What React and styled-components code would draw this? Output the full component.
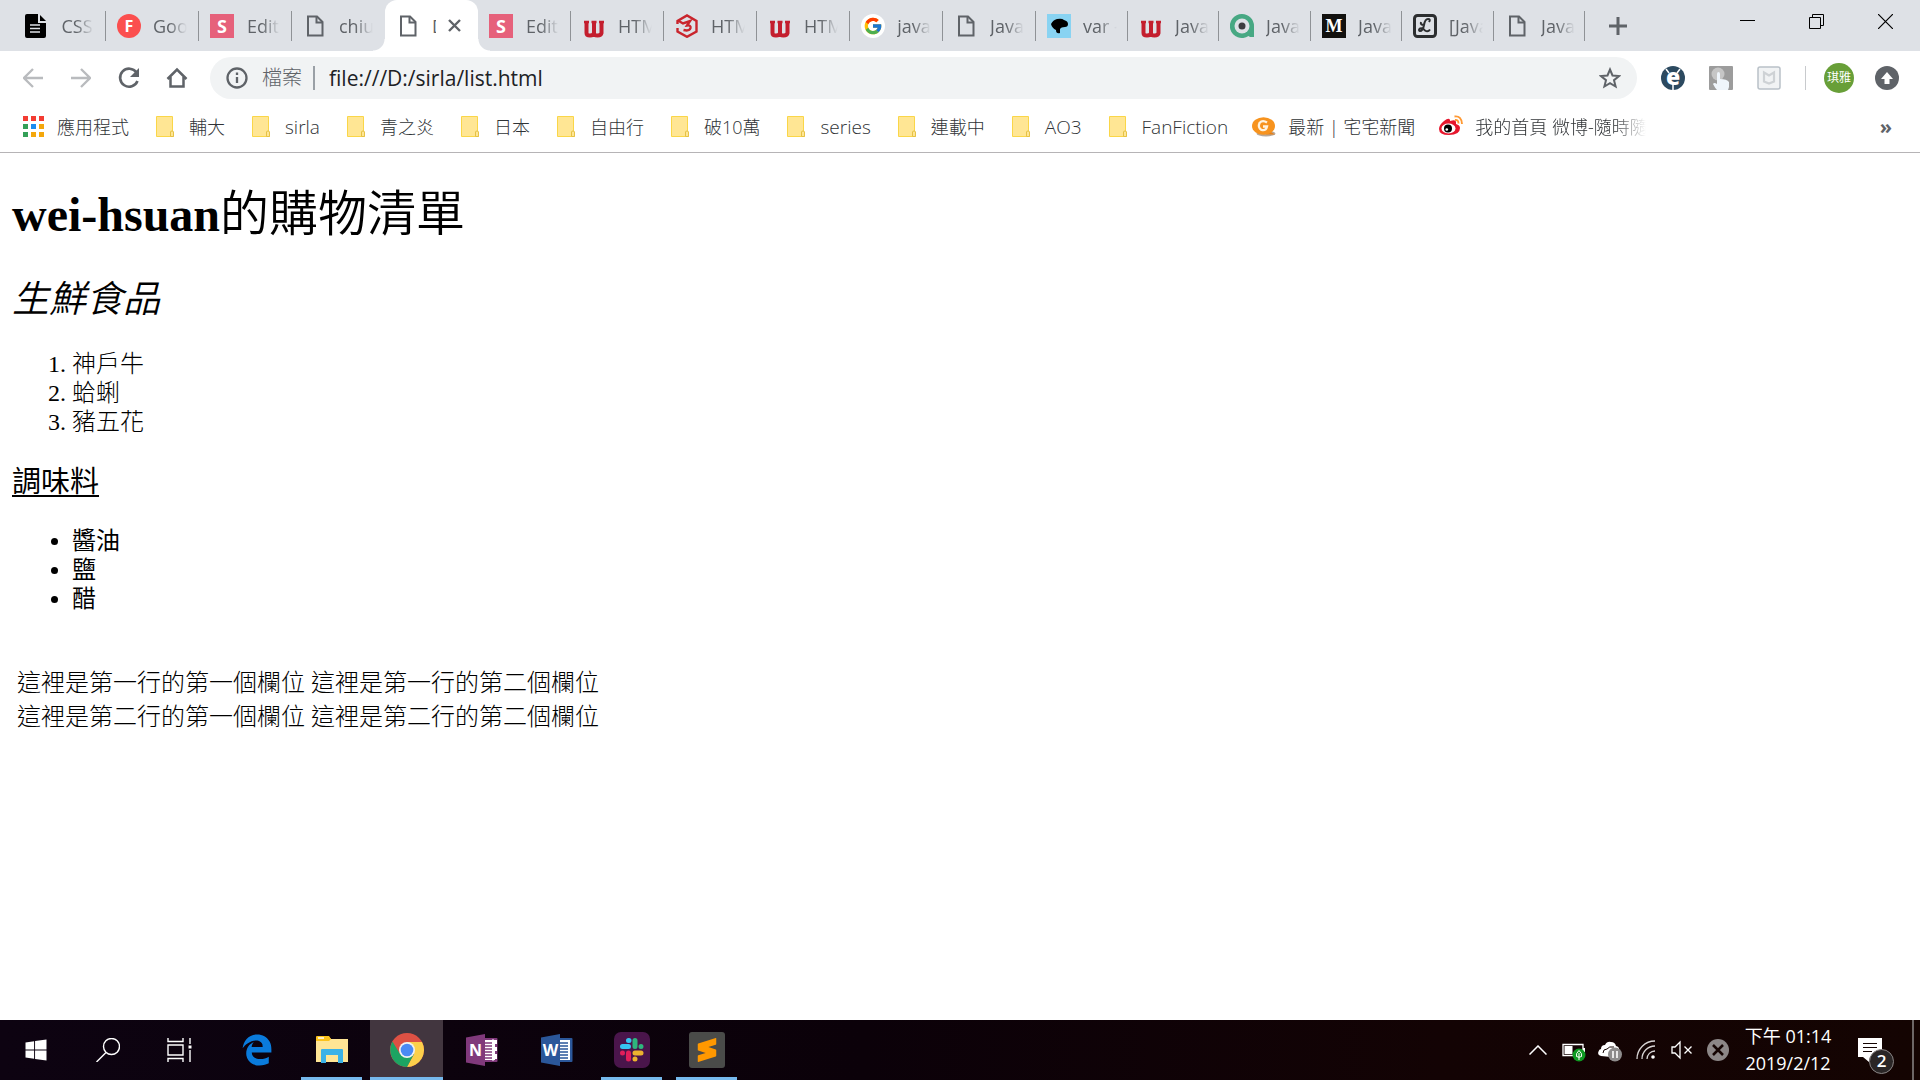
import React from 'react';
import styled, {createGlobalStyle, css} from 'styled-components';
import {FaEdgeLegacy} from 'react-icons/fa6';
import {FaWindows} from 'react-icons/fa';
import {FcGoogle} from 'react-icons/fc';
import {SiSublimetext} from 'react-icons/si';

const GlobalStyle = createGlobalStyle`
  * {
    box-sizing: border-box;
  }

  body {
    margin: 0;
    background: #fff;
  }

  button {
    border: 0;
    padding: 0;
    background: none;
    font: inherit;
    color: inherit;
  }
`;

const uiFont = '"Open Sans", "Noto Sans CJK TC", sans-serif';

const Screen = styled.div`
  display: flex;
  flex-direction: column;
  min-height: 100vh;
  font-family: ${uiFont};
`;

/* ---------- tab strip ---------- */

const TabStrip = styled.div`
  display: flex;
  height: 51px;
  padding-left: 13px;
  background: #dee1e6;
`;

const Tabs = styled.div`
  display: grid;
  grid-template-columns: repeat(11, 93px) repeat(3, 92px 91px);
`;

const TabButton = styled.button`
  position: relative;
  display: flex;
  align-items: center;
  gap: 12px;
  padding-left: 11px;
  font-size: 18px;
  color: #5f6368;

  ${props =>
   props.$line &&
   css`
      &::after {
        content: '';
        position: absolute;
        right: 0;
        top: 11px;
        width: 1px;
        height: 30px;
        background: #8f9296;
      }
    `}

  ${props =>
   props.$active &&
   css`
      background: #fff;
      border-radius: 12px 12px 0 0;

      &::before,
      &::after {
        content: '';
        position: absolute;
        bottom: 0;
        width: 12px;
        height: 12px;
      }

      &::before {
        left: -12px;
        background: radial-gradient(circle at 0 0, #dee1e6 11px, #fff 12px);
      }

      &::after {
        right: -12px;
        background: radial-gradient(circle at 100% 0, #dee1e6 11px, #fff 12px);
      }
    `}
`;

const TabTitle = styled.span`
  width: ${props => (props.$active ? '4px' : '34px')};
  overflow: hidden;
  white-space: nowrap;
  line-height: 26px;
  mask-image: ${props => (props.$active ? 'none' : 'linear-gradient(to right, #000 16px, transparent 34px)')};
`;

const TabClose = styled.span`
  display: flex;
`;

const NewTab = styled.button`
  display: flex;
  align-items: center;
  justify-content: center;
  width: 40px;
  margin-left: 13px;
`;

const WindowButtons = styled.div`
  display: flex;
  height: 42px;
  margin-left: auto;
`;

const WindowButton = styled.button`
  display: flex;
  align-items: center;
  justify-content: center;
  width: 69px;
`;

const Favicon = styled.span`
  display: flex;
  flex: none;
  align-items: center;
  justify-content: center;
  width: 24px;
  height: 24px;
  line-height: 24px;
  font-size: ${props => props.$size || 18}px;
  font-weight: bold;
  font-family: ${props => props.$font || uiFont};
  color: ${props => props.$color || '#fff'};
  background: ${props => props.$bg || 'none'};
  border-radius: ${props => (props.$round ? '50%' : '0')};
`;

/* ---------- toolbar ---------- */

const Toolbar = styled.div`
  display: flex;
  align-items: center;
  height: 54px;
  padding: 0 9px;
`;

const ToolButton = styled.button`
  display: flex;
  flex: none;
  align-items: center;
  justify-content: center;
  width: 48px;
  height: 42px;
`;

const Omnibox = styled.div`
  display: flex;
  flex: 1;
  align-items: center;
  height: 42px;
  margin: 0 12px 0 9px;
  padding: 0 3px 0 16px;
  border-radius: 21px;
  background: #f1f3f4;
`;

const Scheme = styled.label`
  margin-left: 14px;
  padding-right: 11px;
  border-right: 2px solid #9aa0a6;
  font-size: 20px;
  line-height: 24px;
  font-weight: 300;
  color: #5f6368;
`;

const UrlInput = styled.input`
  flex: 1;
  min-width: 0;
  margin-left: 14px;
  padding: 0;
  border: 0;
  outline: none;
  background: none;
  font: 21px/28px ${uiFont};
  color: #202124;
`;

const ToolDivider = styled.span`
  width: 1px;
  height: 24px;
  margin: 0 9px 0 12px;
  background: #c8cacd;
`;

const Avatar = styled.span`
  width: 30px;
  height: 30px;
  border-radius: 50%;
  background: #689f38;
  font-size: 12px;
  line-height: 30px;
  text-align: center;
  color: #fff;
`;

/* ---------- bookmarks ---------- */

const BookmarkBar = styled.nav`
  display: flex;
  align-items: center;
  height: 48px;
  padding: 0 17px 4px 9px;
  border-bottom: 1px solid #b6b4b6;
`;

const Bookmark = styled.a`
  display: flex;
  flex: none;
  align-items: center;
  gap: 12px;
  padding: 0 12px;
  font-size: 18px;
  line-height: 26px;
  font-weight: 300;
  color: #303336;
  text-decoration: none;
  white-space: nowrap;
`;

const BookmarkText = styled.span`
  font-size: ${props => (props.$latin ? '19px' : '18px')};

  ${props =>
   props.$fade &&
   css`
      width: 171px;
      overflow: hidden;
      mask-image: linear-gradient(to right, #000 140px, transparent 171px);
    `}
`;

const More = styled.button`
  margin-left: auto;
  padding: 0 11px;
  font-size: 20px;
  font-weight: bold;
  line-height: 24px;
  color: #5f6368;
`;

/* ---------- page ---------- */

const Page = styled.main`
  flex: 1;
  padding: 33px 12px 0;
  font: 300 24px/29px "Liberation Serif", "Noto Sans CJK TC", serif;
  color: #000;
`;

const Title = styled.h1`
  margin: 0;
  font-size: 48px;
  line-height: 58px;

  span {
    font-size: 49px;
    font-weight: 350;
  }
`;

const Fresh = styled.h2`
  margin: 34px 0 0;
  font-size: 37px;
  line-height: 44px;
  font-style: italic;
  font-weight: 350;
`;

const Seasoning = styled.h3`
  margin: 28px 0 0;
  font-size: 29px;
  line-height: 34px;
  font-weight: 400;
  text-decoration: underline;
  text-underline-offset: 3px;
`;

const FreshList = styled.ol`
  margin: 28px 0 0;
  padding-left: 60px;
`;

const SeasoningList = styled.ul`
  margin: 28px 0 0;
  padding-left: 60px;
  font-weight: 400;
`;

const Grid = styled.table`
  margin-top: 50px;
  border-spacing: 4px;

  td {
    padding: 1px;
    line-height: 28px;
    white-space: nowrap;
  }
`;

/* ---------- taskbar ---------- */

const Taskbar = styled.footer`
  display: flex;
  height: 60px;
  background: linear-gradient(to right, #0d0311, #0b0109 45%, #130304 75%, #140402);
  color: #fff;
`;

const TaskButton = styled.button`
  display: flex;
  align-items: center;
  justify-content: center;
  width: 72px;
`;

const Apps = styled.div`
  display: flex;
  margin-left: 3px;
`;

const AppButton = styled.button`
  display: flex;
  align-items: center;
  justify-content: center;
  width: ${props => (props.$active ? '73px' : '61px')};
  margin: ${props => (props.$active ? '0 1px' : '0 7px')};
  padding-top: 3px;
  border-bottom: 3px solid ${props => (props.$open ? '#76b9ed' : 'transparent')};
  background: ${props => (props.$active ? '#42363f' : 'none')};
`;

const SublimeTile = styled.span`
  display: flex;
  align-items: center;
  justify-content: center;
  width: 36px;
  height: 36px;
  border-radius: 3px;
  background: #4a4b49;
  color: #ff9800;
`;

const Tray = styled.div`
  display: flex;
  align-items: center;
  margin-left: auto;
`;

const TrayButton = styled.button`
  display: flex;
  align-items: center;
  justify-content: center;
  width: 36px;
  height: 60px;
`;

const Clock = styled.time`
  width: 104px;
  font-size: 18px;
  line-height: 27px;
  text-align: center;
`;

const Notice = styled.button`
  position: relative;
  display: flex;
  align-items: center;
  width: 72px;
  height: 60px;
  padding-left: 18px;
`;

const Badge = styled.span`
  position: absolute;
  left: 29px;
  top: 29px;
  width: 25px;
  height: 25px;
  border: 1px solid #8a8585;
  border-radius: 50%;
  background: #2a2626;
  font-size: 17px;
  font-weight: 600;
  line-height: 22px;
  text-align: center;
`;

const ShowDesktop = styled.button`
  width: 8px;
  height: 60px;
  border-left: 2px solid #6d6666;
`;

/* ---------- icons ---------- */

const PageIcon = () => (
   <svg width="24" height="24" viewBox="0 0 24 24" fill="none" stroke="#5f6368" strokeWidth="2">
      <path d="M5 2.500h9l5.500 5.500v13.500H5z"/>
      <path d="M13.500 2.500v6h6"/>
   </svg>
);

const BlackDoc = () => (
   <svg width="24" height="24" viewBox="0 0 24 24">
      <path d="M3 0h11v9h8v13q0 2-2 2H3q-2 0-2-2V2q0-2 2-2z"/>
      <path d="M16 1l6 6h-6z"/>
      <path d="M6 11h10M6 14.500h10M6 18h10" stroke="#dee1e6" strokeWidth="1.500"/>
   </svg>
);

const WIcon = () => (
   <svg width="24" height="24" viewBox="0 0 24 24" fill="none" stroke="#c41e2e" strokeWidth="4">
      <path d="M4.500 8v11q0 2.500 3.500 2.500t4-2.500V8M12 19q0 2.500 3.500 2.500t4-2.500V8"/>
      <path d="M2 8h5M9.500 8h5M17 8h5" strokeWidth="2.500"/>
   </svg>
);

const HexIcon = () => (
   <svg width="24" height="24" viewBox="0 0 24 24" fill="none" stroke="#c9252d" strokeWidth="2.400">
      <path d="M2.500 10V7L12 1.500 21.500 7v10.500L12 22.800l-9.500-5.300V14"/>
      <path d="M3 6.500l5 3 7-2.500-3 4.500q4-.5 3.500 2.500-1 3.500-7 2"/>
   </svg>
);

const BirdIcon = () => (
   <svg width="24" height="24" viewBox="0 0 24 24">
      <path d="M0 0h24v24H0z" fill="#89d3f2"/>
      <path d="M4 10q2-4 6-5 5-1 7 1 4 1 4 4 0 3-3 3-4 0-5 2v4q-4 1-4-3-4-2-5-6z"/>
   </svg>
);

const AIcon = () => (
   <svg width="24" height="24" viewBox="0 0 24 24">
      <path d="M12 0a12 12 0 1 0 6.500 22l1.500 1h4V12A12 12 0 0 0 12 0z" fill="#47a883"/>
      <circle cx="12" cy="12" r="7.500" fill="#dee1e6"/>
      <circle cx="12" cy="12" r="3.500" fill="#3d3d40"/>
   </svg>
);

const LIcon = () => (
   <svg width="24" height="24" viewBox="0 0 24 24" fill="none" stroke="#2c2e30">
      <rect x="1.500" y="1.500" width="21" height="21" rx="3" strokeWidth="3"/>
      <path d="M16 8q2-3-1-3-3 0-4 6-1 6-4 6-2-1 0-2.500 3-1 5 2 3 2 5-1M11 11q-4 0-3-3" strokeWidth="2"/>
   </svg>
);

const Back = ({flip}) => (
   <svg width="20" height="20" viewBox="0 0 20 20" fill="none" stroke="#b9bbbe" strokeWidth="2.300">
      {flip ? <path d="M0 10h18M10 1l9 9-9 9"/> : <path d="M20 10H2M10 1l-9 9 9 9"/>}
   </svg>
);

const Reload = () => (
   <svg width="22" height="22" viewBox="0 0 22 22" fill="none" stroke="#5f6368" strokeWidth="2.600">
      <path d="M18.500 5.500A9 9 0 1 0 19.500 14"/>
      <path d="M21 1v9h-9z" fill="#5f6368" stroke="none"/>
   </svg>
);

const Home = () => (
   <svg width="22" height="22" viewBox="0 0 22 22" fill="none" stroke="#5f6368" strokeWidth="2.500">
      <path d="M1.500 12L11 2.500l9.500 9.500M4.500 10v9.500h13V10"/>
   </svg>
);

const Info = () => (
   <svg width="22" height="22" viewBox="0 0 22 22" fill="none" stroke="#5f6368" strokeWidth="2.300">
      <circle cx="11" cy="11" r="9.500"/>
      <path d="M11 10v6M11 5.500v2.500"/>
   </svg>
);

const Star = () => (
   <svg width="22" height="22" viewBox="0 0 22 22" fill="none" stroke="#5f6368" strokeWidth="2">
      <path d="M11 2.500l2.500 6 6.500.5-5 4.200 1.600 6.300L11 16.200 5.400 19.500 7 13.200 2 9l6.500-.5z"/>
   </svg>
);

const ExtE = () => (
   <svg width="24" height="24" viewBox="0 0 24 24">
      <circle cx="12" cy="12" r="12" fill="#2c4a60"/>
      <path d="M5 3l3 4M19 3l-3 4M12 18v6" stroke="#fff" strokeWidth="1.500"/>
      <text x="12" y="18.500" textAnchor="middle" fontFamily="Open Sans, sans-serif" fontSize="23" fontWeight="800" fill="#fff">e</text>
   </svg>
);

const ExtTouch = () => (
   <svg width="24" height="24" viewBox="0 0 24 24">
      <rect width="24" height="24" rx="1" fill="#9c9c9c"/>
      <circle cx="9" cy="8" r="6.500" fill="#c6c6c6"/>
      <path d="M8 8q0-2 1.500-2T11 8v5q7 0 9 3v5l-1 3H8q-2-2-4-6 1-2 4 0z" fill="#eff5fb"/>
   </svg>
);

const ExtShield = () => (
   <svg width="24" height="24" viewBox="0 0 24 24" fill="none">
      <rect x="1" y="1" width="22" height="22" rx="2" fill="#f1f3f4" stroke="#b9c1c8" strokeWidth="1.500"/>
      <path d="M7 6.500l5 3 5-3v9l-5 2-5-2z" stroke="#ced2d5" strokeWidth="2.200"/>
   </svg>
);

const UpIcon = () => (
   <svg width="24" height="24" viewBox="0 0 24 24">
      <circle cx="12" cy="12" r="12" fill="#5f6368"/>
      <path d="M12 6l6 7h-3.500v5h-5v-5H6z" fill="#fff"/>
   </svg>
);

const AppsIcon = () => (
   <svg width="24" height="24" viewBox="0 0 24 24">
      {['#f33c32', '#f33c32', '#f33c32', '#34a058', '#1a8cf0', '#f4a70c', '#34a058', '#f4a70c', '#f4a70c'].map((color, idx) => (
         <rect key={idx} x={2 + (idx % 3) * 8} y={1 + Math.floor(idx / 3) * 8} width="5" height="5" fill={color}/>
      ))}
   </svg>
);

const FolderIcon = () => (
   <svg width="24" height="24" viewBox="0 0 24 24" fill="#ffe694" stroke="#fad648">
      <path d="M3.500 1.500h16v15l1 5h-17z"/>
      <path d="M17.500 21.500V17q0-1 1.500-1t1.500 1v4.500z" stroke="#e6c246"/>
   </svg>
);

const OrangeG = () => (
   <svg width="24" height="24" viewBox="0 0 24 24">
      <ellipse cx="14" cy="18.500" rx="9.500" ry="3" fill="#b9a898"/>
      <path d="M17 16l6 3.500h-9z" fill="#e5811a"/>
      <ellipse cx="11.500" cy="11" rx="11.500" ry="8.800" fill="#f7931e"/>
      <path d="M15 7.500Q10.500 4.500 7.500 8q-2 4.500 2 7 4.500 1 5.500-3.500h-4" fill="none" stroke="#fff3df" strokeWidth="2.300"/>
   </svg>
);

const WeiboIcon = () => (
   <svg width="24" height="24" viewBox="0 0 24 24">
      <path d="M0 14q0-4 5-8 5-4 6-1 0 1 0 1 6-2 6 1v2q4 1 4 4 0 7-11 7Q0 20 0 14z" fill="#e6162d"/>
      <ellipse cx="9.500" cy="13.500" rx="7" ry="5" fill="#fff"/>
      <circle cx="9" cy="13.500" r="4" fill="#000"/>
      <circle cx="7.800" cy="14.500" r="1.300" fill="#fff"/>
      <path d="M15.500 1.500q7-1 7.500 7.500M16 5q3.500-.5 3.500 3.500" fill="none" stroke="#ff9933" strokeWidth="1.900"/>
   </svg>
);

const TaskView = () => (
   <svg width="26" height="24" viewBox="0 0 26 24" fill="none" stroke="#fff" strokeWidth="1.400">
      <path d="M1 0v3.500h15V0M1 24v-3.500h15V24M1 7h15v10H1zM23 0v6M23 12v12"/>
      <path d="M21.500 7.500h3v3h-3z" fill="#fff" stroke="none"/>
   </svg>
);

const SearchIcon = () => (
   <svg width="24" height="24" viewBox="0 0 24 24" fill="none" stroke="#fff" strokeWidth="1.400">
      <circle cx="15.500" cy="8.500" r="8"/>
      <path d="M10 14.500L.5 24"/>
   </svg>
);

const Explorer = () => (
   <svg width="32" height="28" viewBox="0 0 32 28">
      <path d="M0 1h13l2 2h17v23H0z" fill="#ffe595"/>
      <path d="M0 1q0-1 1-1h12l2 3-2 2H0z" fill="#fcc21b"/>
      <path d="M2 2h6" stroke="#fff" strokeWidth="1.500"/>
      <path d="M5 14q0-1 1-1h20q1 0 1 1v13h-5v-8H10v8H5z" fill="#3bb2e7"/>
   </svg>
);

const Chrome = () => (
   <svg width="34" height="34" viewBox="0 0 34 34">
      <circle cx="17" cy="17" r="17" fill="#dd5144"/>
      <path d="M17 9h15a17 17 0 0 1-15 25l7-13z" fill="#fcd04b"/>
      <path d="M2.500 8.500A17 17 0 0 0 17 34l7-13H10z" fill="#1da462"/>
      <circle cx="17" cy="17" r="8" fill="#f1f1f1"/>
      <circle cx="17" cy="17" r="6.300" fill="#4a8af4"/>
   </svg>
);

const OfficeIcon = ({color, letter, tabs}) => (
   <svg width="32" height="32" viewBox="0 0 32 32">
      <rect x="18" y="4" width="13.500" height="24" rx="1" fill={color}/>
      <rect x="18" y="6" width="11" height="20" fill="#fff"/>
      <path d="M19 9h8M19 12h8M19 15h8M19 18h8M19 21h8M19 24h8" stroke={color} strokeWidth="1.500"/>
      {tabs && <path d="M27 5.500v21M30 6v4M30 13v4M30 20v5" stroke="#fff" strokeWidth="2"/>}
      <path d="M0 3.500L19 0v32L0 28.500z" fill={color}/>
      <text x="9.500" y="22" textAnchor="middle" fontFamily="Open Sans, sans-serif" fontSize="16" fontWeight="700" fill="#fff">{letter}</text>
   </svg>
);

const Slack = () => (
   <svg width="36" height="36" viewBox="0 0 36 36" strokeWidth="5" strokeLinecap="round">
      <rect width="36" height="36" rx="7" fill="#4a154b"/>
      <path d="M8.500 14.500h6M14.500 8.500h.5" stroke="#36c5f0"/>
      <path d="M21 8.500v6M27 14.500v.1" stroke="#2eb67d"/>
      <path d="M21 21h6M21 27v.1" stroke="#ecb22e"/>
      <path d="M14.500 21v6M8.500 21v.1" stroke="#e01e5a"/>
   </svg>
);

const Chevron = () => (
   <svg width="18" height="10" viewBox="0 0 18 10" fill="none" stroke="#fff" strokeWidth="1.500">
      <path d="M.5 9.500L9 1l8.500 8.500"/>
   </svg>
);

const Battery = () => (
   <svg width="24" height="24" viewBox="0 0 24 24">
      <path d="M1 6.500h20v11H1z" fill="none" stroke="#fff" strokeWidth="1.300"/>
      <path d="M2.500 8h8v8h-8zM21 10h2v4h-2z" fill="#fff"/>
      <circle cx="17" cy="17" r="6.500" fill="#0e9a22"/>
      <path d="M17 12.500q-3.500 3-2.500 6 2.500 1.500 5 0 1-3-2.500-6zM17 15v7" fill="none" stroke="#fff"/>
   </svg>
);

const Cloud = () => (
   <svg width="24" height="24" viewBox="0 0 24 24">
      <path d="M3 18q-4-1-2.500-4.500Q1 11 3 11q0-4 4-4 2-4 6-3 4 0 5 4 4 1 3 5l-8 6z" fill="#fff"/>
      <path d="M5 15q0-4 4-4 2-3 7-2" fill="none" stroke="#140402"/>
      <circle cx="17" cy="16.500" r="7" fill="#8e8c8c"/>
      <path d="M15 13v7M19 13v7" stroke="#fff" strokeWidth="1.600"/>
   </svg>
);

const Wifi = () => (
   <svg width="20" height="20" viewBox="0 0 20 20" fill="none" stroke="#d8d4d4" strokeWidth="1.300">
      <path d="M1 19A18 18 0 0 1 19 1M6 19A13 13 0 0 1 19 6M11 19a8 8 0 0 1 8-8"/>
      <circle cx="17" cy="17" r="1.800" fill="#fff" stroke="none"/>
   </svg>
);

const Mute = () => (
   <svg width="22" height="20" viewBox="0 0 22 20" fill="none" stroke="#fff" strokeWidth="1.300">
      <path d="M1 7h3l5-5v16l-5-5H1zM13.500 6.500l7 7M20.500 6.500l-7 7"/>
   </svg>
);

const XCircle = () => (
   <svg width="22" height="22" viewBox="0 0 22 22">
      <circle cx="11" cy="11" r="11" fill="#8c8787"/>
      <path d="M6 6l10 10M16 6L6 16" stroke="#140402" strokeWidth="2.500"/>
   </svg>
);

const Message = () => (
   <svg width="24" height="24" viewBox="0 0 24 24">
      <path d="M0 0h24v19H12l-1 5-6-5H0z" fill="#fff"/>
      <path d="M5 5.500h14M5 9.500h14M5 13.500h9" stroke="#140402" strokeWidth="1.200"/>
   </svg>
);

const S = <Favicon $bg="#e6617b">S</Favicon>;

const tabs = [
   {title: 'CSS ', icon: <BlackDoc/>},
   {title: 'Goog', icon: <Favicon $bg="#fb4f4f" $size={16} $round>F</Favicon>},
   {title: 'Edit', icon: S},
   {title: 'chiu', icon: <PageIcon/>},
   {title: 'D', icon: <PageIcon/>},
   {title: 'Edit', icon: S},
   {title: 'HTML', icon: <WIcon/>},
   {title: 'HTML', icon: <HexIcon/>},
   {title: 'HTML', icon: <WIcon/>},
   {title: 'java', icon: <Favicon $bg="#fff" $size={20} $round><FcGoogle/></Favicon>},
   {title: 'Java', icon: <PageIcon/>},
   {title: 'var -', icon: <BirdIcon/>},
   {title: 'Java', icon: <WIcon/>},
   {title: 'Java', icon: <AIcon/>},
   {title: 'Java', icon: <Favicon $bg="#12110f" $font='"Liberation Serif", serif'>M</Favicon>},
   {title: '[Java', icon: <LIcon/>},
   {title: 'Java', icon: <PageIcon/>},
];

const ACTIVE = 4;

const folders = ['輔大', 'sirla', '青之炎', '日本', '自由行', '破10萬', 'series', '連載中', 'AO3', 'FanFiction'];

function Browser() {
   return (
      <header>
         <TabStrip>
            <Tabs role="tablist">
               {tabs.map((tab, idx) => (
                  <TabButton
                     key={idx}
                     role="tab"
                     aria-selected={idx === ACTIVE}
                     $active={idx === ACTIVE}
                     $line={idx !== ACTIVE && idx !== ACTIVE - 1}>
                     {tab.icon}
                     <TabTitle $active={idx === ACTIVE}>{tab.title}</TabTitle>
                     {idx === ACTIVE && (
                        <TabClose>
                           <svg width="13" height="13" viewBox="0 0 13 13" stroke="#5f6368" strokeWidth="2.400">
                              <path d="M1 1l11 11M12 1L1 12"/>
                           </svg>
                        </TabClose>
                     )}
                  </TabButton>
               ))}
            </Tabs>
            <NewTab aria-label="new tab">
               <svg width="18" height="18" viewBox="0 0 18 18" stroke="#5f6368" strokeWidth="3">
                  <path d="M9 0v18M0 9h18"/>
               </svg>
            </NewTab>
            <WindowButtons>
               <WindowButton aria-label="minimize">
                  <svg width="15" height="15" viewBox="0 0 15 15" stroke="#000"><path d="M0 6.500h15"/></svg>
               </WindowButton>
               <WindowButton aria-label="restore">
                  <svg width="15" height="15" viewBox="0 0 15 15" fill="none" stroke="#000">
                     <path d="M.5 3.500h11v11H.5zM3.500 3.500v-3h11v11h-3"/>
                  </svg>
               </WindowButton>
               <WindowButton aria-label="close">
                  <svg width="15" height="15" viewBox="0 0 15 15" stroke="#000" strokeWidth="1.200">
                     <path d="M0 0l15 15M15 0L0 15"/>
                  </svg>
               </WindowButton>
            </WindowButtons>
         </TabStrip>
         <Toolbar>
            <ToolButton aria-label="back"><Back/></ToolButton>
            <ToolButton aria-label="forward"><Back flip/></ToolButton>
            <ToolButton aria-label="reload"><Reload/></ToolButton>
            <ToolButton aria-label="home"><Home/></ToolButton>
            <Omnibox>
               <Info/>
               <Scheme htmlFor="url">檔案</Scheme>
               <UrlInput id="url" defaultValue="file:///D:/sirla/list.html"/>
               <ToolButton aria-label="bookmark"><Star/></ToolButton>
            </Omnibox>
            <ToolButton aria-label="extension"><ExtE/></ToolButton>
            <ToolButton aria-label="touch"><ExtTouch/></ToolButton>
            <ToolButton aria-label="shield"><ExtShield/></ToolButton>
            <ToolDivider/>
            <ToolButton><Avatar>琪雅</Avatar></ToolButton>
            <ToolButton aria-label="update"><UpIcon/></ToolButton>
         </Toolbar>
         <BookmarkBar>
            <Bookmark href="#apps"><AppsIcon/><BookmarkText>應用程式</BookmarkText></Bookmark>
            {folders.map(name => (
               <Bookmark key={name} href="#folder">
                  <FolderIcon/>
                  <BookmarkText $latin={/^[a-z0-9]+$/i.test(name)}>{name}</BookmarkText>
               </Bookmark>
            ))}
            <Bookmark href="#news"><OrangeG/><BookmarkText>最新 | 宅宅新聞</BookmarkText></Bookmark>
            <Bookmark href="#weibo">
               <WeiboIcon/>
               <BookmarkText $fade>我的首頁 微博-隨時隨地</BookmarkText>
            </Bookmark>
            <More aria-label="more bookmarks">»</More>
         </BookmarkBar>
      </header>
   );
}

function ShoppingList() {
   return (
      <Page>
         <Title>wei-hsuan<span>的購物清單</span></Title>
         <Fresh>生鮮食品</Fresh>
         <FreshList>
            <li>神戶牛</li>
            <li>蛤蜊</li>
            <li>豬五花</li>
         </FreshList>
         <Seasoning>調味料</Seasoning>
         <SeasoningList>
            <li>醬油</li>
            <li>鹽</li>
            <li>醋</li>
         </SeasoningList>
         <Grid>
            <tbody>
               <tr>
                  <td>這裡是第一行的第一個欄位</td>
                  <td>這裡是第一行的第二個欄位</td>
               </tr>
               <tr>
                  <td>這裡是第二行的第一個欄位</td>
                  <td>這裡是第二行的第二個欄位</td>
               </tr>
            </tbody>
         </Grid>
      </Page>
   );
}

function WindowsTaskbar() {
   return (
      <Taskbar>
         <TaskButton aria-label="start"><FaWindows size={24}/></TaskButton>
         <TaskButton aria-label="search"><SearchIcon/></TaskButton>
         <TaskButton aria-label="task view"><TaskView/></TaskButton>
         <Apps>
            <AppButton aria-label="edge"><FaEdgeLegacy size={32} color="#0a7bdc"/></AppButton>
            <AppButton aria-label="explorer" $open><Explorer/></AppButton>
            <AppButton aria-label="chrome" $open $active><Chrome/></AppButton>
            <AppButton aria-label="onenote"><OfficeIcon color="#80397b" letter="N" tabs/></AppButton>
            <AppButton aria-label="word"><OfficeIcon color="#2b579a" letter="W"/></AppButton>
            <AppButton aria-label="slack" $open><Slack/></AppButton>
            <AppButton aria-label="sublime" $open><SublimeTile><SiSublimetext size={24}/></SublimeTile></AppButton>
         </Apps>
         <Tray>
            <TrayButton aria-label="hidden icons"><Chevron/></TrayButton>
            <TrayButton aria-label="battery"><Battery/></TrayButton>
            <TrayButton aria-label="cloud"><Cloud/></TrayButton>
            <TrayButton aria-label="network"><Wifi/></TrayButton>
            <TrayButton aria-label="volume"><Mute/></TrayButton>
            <TrayButton aria-label="offline"><XCircle/></TrayButton>
            <Clock>下午 01:14<br/>2019/2/12</Clock>
            <Notice aria-label="notifications">
               <Message/>
               <Badge>2</Badge>
            </Notice>
            <ShowDesktop aria-label="show desktop"/>
         </Tray>
      </Taskbar>
   );
}

function App() {
   return (
      <Screen>
         <GlobalStyle/>
         <Browser/>
         <ShoppingList/>
         <WindowsTaskbar/>
      </Screen>
   );
}

export default App;
